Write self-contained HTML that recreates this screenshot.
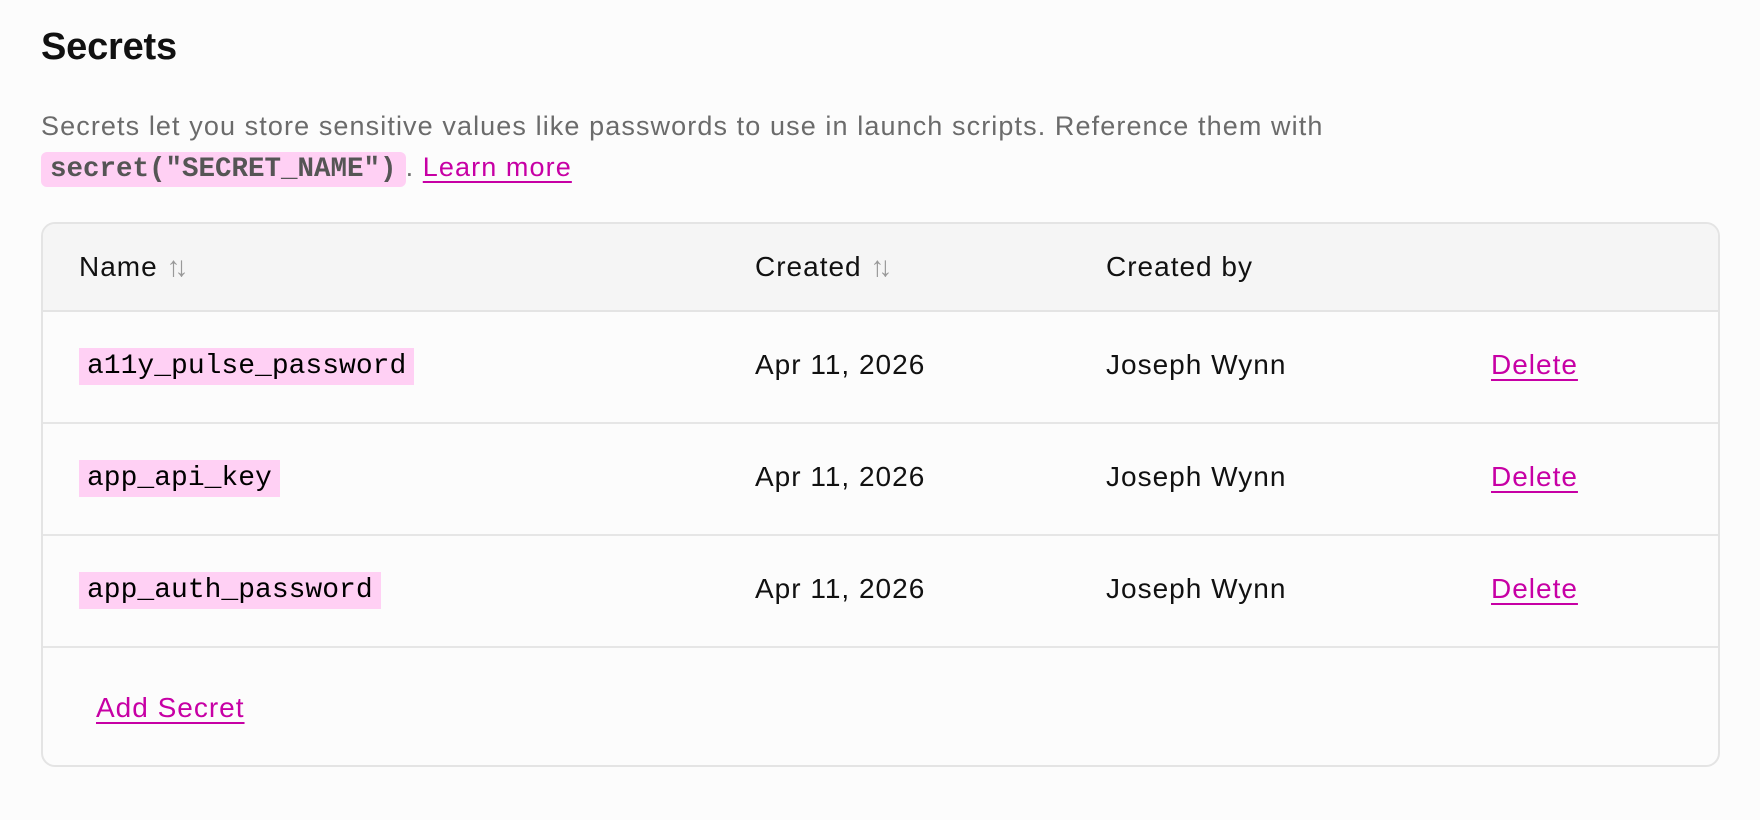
<!DOCTYPE html>
<html><head><style>
body{margin:0;background:#fcfcfc;width:1760px;height:820px;overflow:hidden;font-family:"Liberation Sans",sans-serif;color:#111;}
h1{position:absolute;left:41px;top:26px;margin:0;font-size:38px;font-weight:bold;letter-spacing:-0.2px;}
.p{position:absolute;left:41px;top:106px;font-size:27px;color:#6b6b6b;line-height:41px;letter-spacing:1.1px;width:1450px;}
.code{font-family:"Liberation Mono",monospace;font-weight:bold;color:#555;background:#ffd0f4;border-radius:6px;padding:2px 9px;font-size:27.5px;letter-spacing:0;}
a{color:#c700a5;text-decoration:underline;text-decoration-thickness:2px;text-underline-offset:5px;}
.tbl{position:absolute;left:41px;top:222px;width:1675px;height:541px;border:2px solid #e4e4e4;border-radius:14px;overflow:hidden;background:#fcfcfc;}
.hd{position:absolute;left:0;top:0;right:0;height:86px;background:#f5f5f5;border-bottom:2px solid #e4e4e4;}
.row{position:absolute;left:0;right:0;height:110px;border-bottom:2px solid #e6e6e6;}
.t{position:absolute;font-size:28px;letter-spacing:1px;white-space:nowrap;}
.chip{position:absolute;left:36px;background:#ffd0f4;font-family:"Liberation Mono",monospace;font-size:28px;padding:2px 8px;height:33px;line-height:33px;color:#000;}
.arr{color:#999;font-size:28px;letter-spacing:-6px;}
</style></head><body>
<h1>Secrets</h1>
<div class="p">Secrets let you store sensitive values like passwords to use in launch scripts. Reference them with<br><span class="code">secret("SECRET_NAME")</span>. <a>Learn more</a></div>
<div class="tbl">
<div class="hd">
<div class="t" style="left:36px;top:27px">Name <span class="arr">↑↓</span></div>
<div class="t" style="left:712px;top:27px">Created <span class="arr">↑↓</span></div>
<div class="t" style="left:1063px;top:27px">Created by</div>
</div>
<div class="row" style="top:88px"><div class="chip" style="top:36px">a11y_pulse_password</div><div class="t" style="left:712px;top:37px">Apr 11, 2026</div><div class="t" style="left:1063px;top:37px">Joseph Wynn</div><div class="t" style="left:1448px;top:37px"><a>Delete</a></div></div>
<div class="row" style="top:200px"><div class="chip" style="top:36px">app_api_key</div><div class="t" style="left:712px;top:37px">Apr 11, 2026</div><div class="t" style="left:1063px;top:37px">Joseph Wynn</div><div class="t" style="left:1448px;top:37px"><a>Delete</a></div></div>
<div class="row" style="top:312px"><div class="chip" style="top:36px">app_auth_password</div><div class="t" style="left:712px;top:37px">Apr 11, 2026</div><div class="t" style="left:1063px;top:37px">Joseph Wynn</div><div class="t" style="left:1448px;top:37px"><a>Delete</a></div></div>
<div class="t" style="left:53px;top:468px"><a>Add Secret</a></div>
</div>
</body></html>
